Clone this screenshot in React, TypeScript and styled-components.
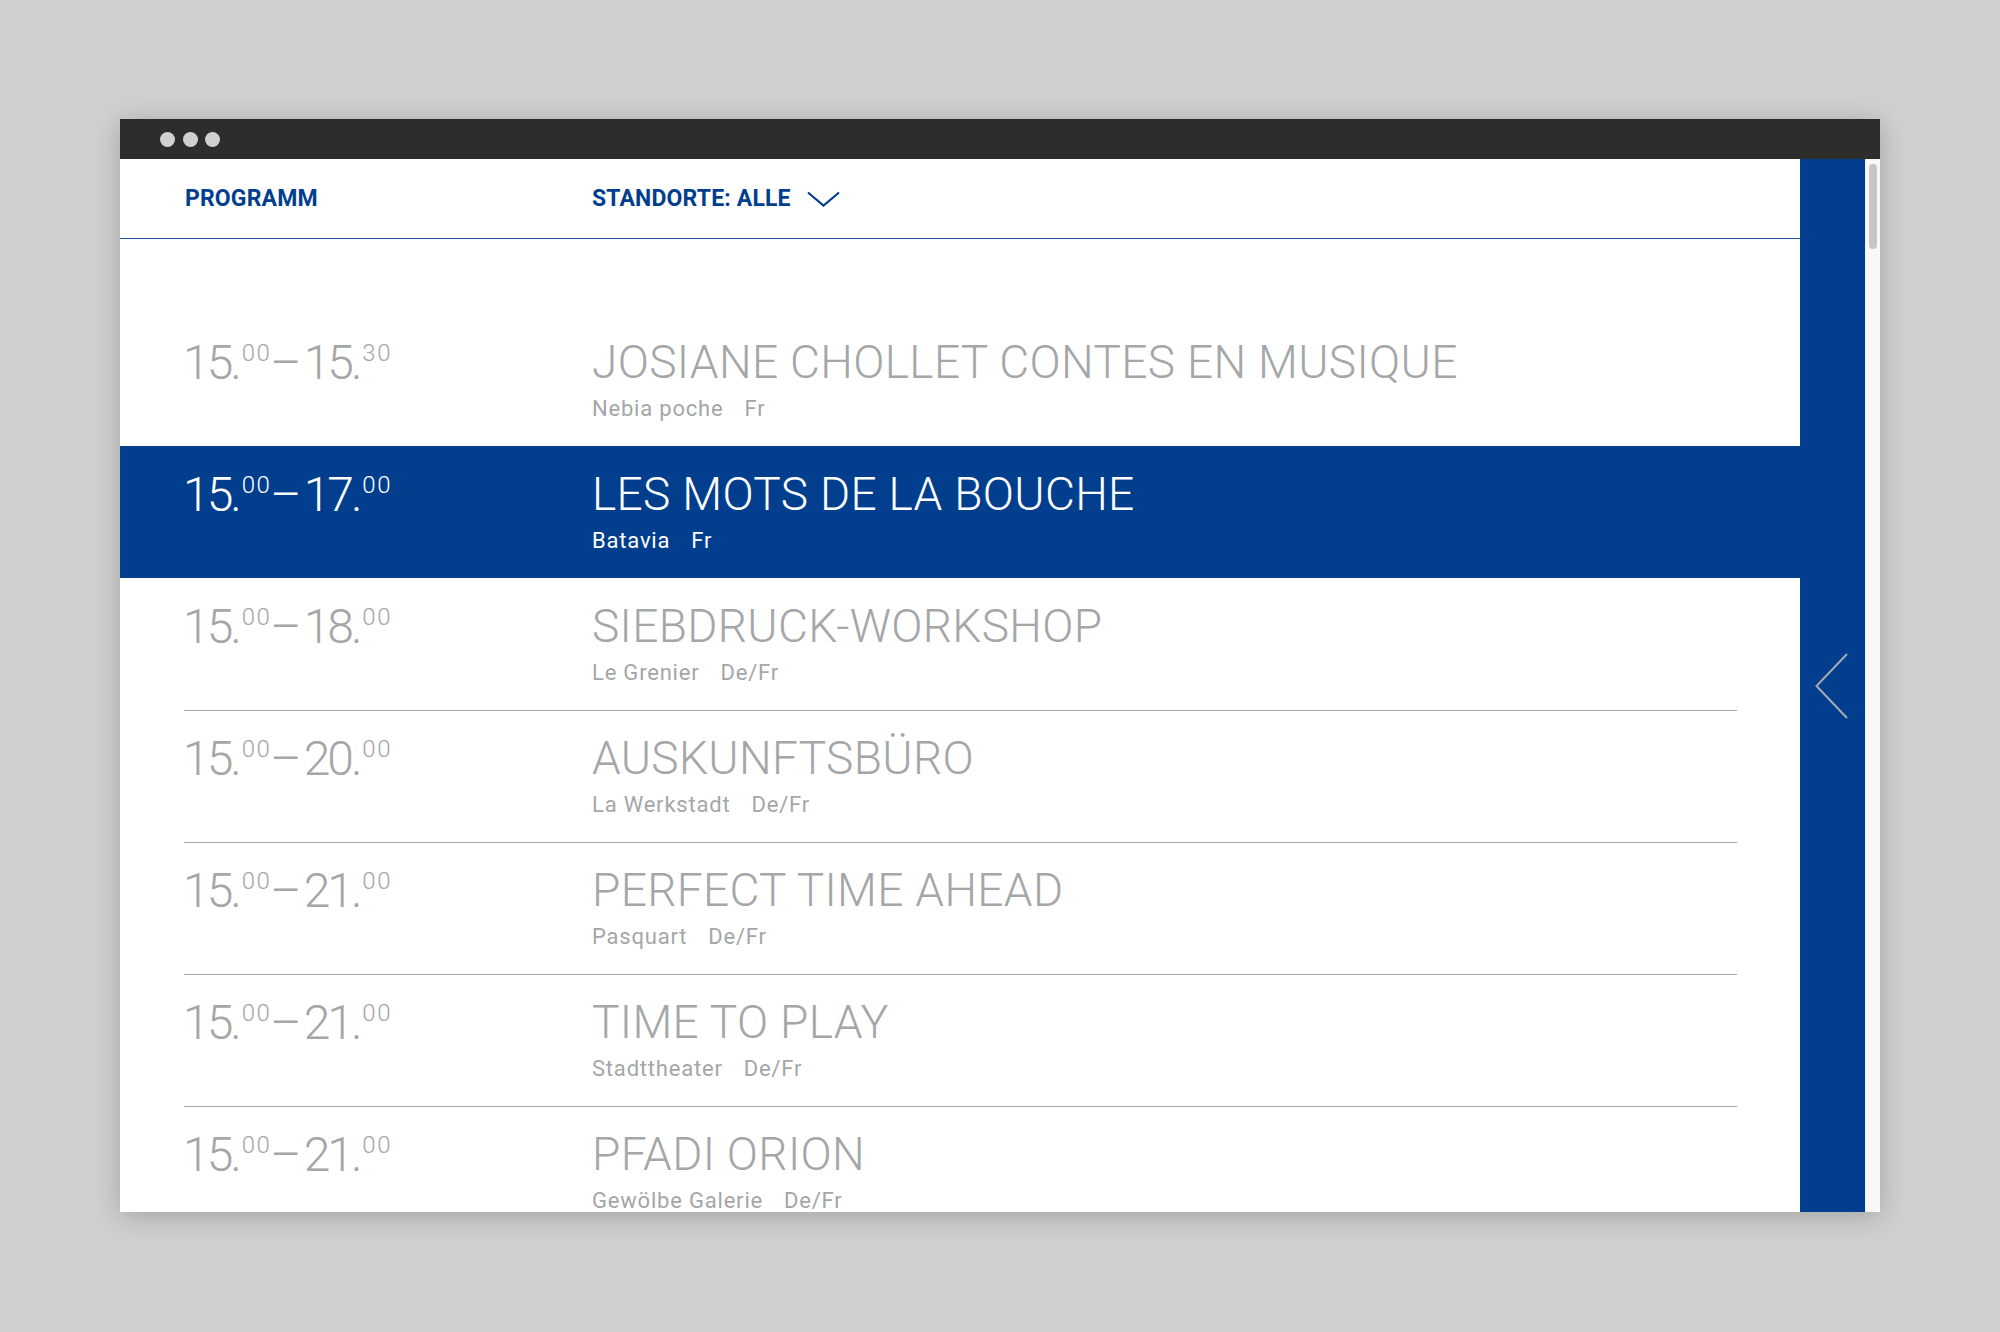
import React from "react";
import styled, { createGlobalStyle } from "styled-components";

const BLUE = "#023e8e";
const GRAY = "#a4a6a8";

const Global = createGlobalStyle`
  html, body { margin: 0; padding: 0; }
  body {
    background: #d0d0d0;
    font-family: Roboto, "Noto Sans", sans-serif;
    width: 2000px;
    height: 1332px;
    overflow: hidden;
  }
`;

const Stage = styled.div`
  padding: 119px 120px 0 120px;
`;

const Window = styled.div`
  width: 1760px;
  height: 1093px;
  display: flex;
  flex-direction: column;
  background: #fff;
  box-shadow: 0 4px 26px rgba(0, 0, 0, 0.22);
`;

const TitleBar = styled.div`
  height: 40px;
  flex: none;
  background: #2e2d2b;
  display: flex;
  align-items: center;
  gap: 7.5px;
  padding-left: 40px;
`;

const Dot = styled.span`
  width: 15px;
  height: 15px;
  border-radius: 50%;
  background: #d0d0d0;
`;

const Body = styled.div`
  flex: 1;
  display: flex;
  min-height: 0;
`;

const Main = styled.div`
  width: 1680px;
  display: flex;
  flex-direction: column;
  overflow: hidden;
`;

const Header = styled.div`
  height: 79px;
  flex: none;
  border-bottom: 1px solid #2756a3;
  display: grid;
  grid-template-columns: 407px 1fr;
  align-items: center;
  padding-left: 65px;
`;

const HeaderLabel = styled.div`
  color: ${BLUE};
  font-family: Roboto, sans-serif;
  font-weight: 700;
  font-size: 23px;
  letter-spacing: 0.15px;
  display: flex;
  align-items: center;
  gap: 16px;
`;

const List = styled.div`
  padding-top: 75px;
`;

const Row = styled.div<{ $selected?: boolean }>`
  height: 132px;
  box-sizing: border-box;
  padding: 0 63px 0 65px;
  background: ${(p) => (p.$selected ? BLUE : "transparent")};
  color: ${(p) => (p.$selected ? "#fff" : GRAY)};
`;

const RowInner = styled.div<{ $divided?: boolean }>`
  height: 100%;
  box-sizing: border-box;
  margin-left: -1px;
  border-top: 1px solid ${(p) => (p.$divided ? "#a9a9a9" : "transparent")};
  display: grid;
  grid-template-columns: 408px 1fr;
  padding-top: 24px;
`;

const Time = styled.div`
  display: flex;
  align-items: flex-start;
  margin-left: -1px;
`;

const TimeMain = styled.span`
  font-weight: 300;
  font-size: 48px;
  line-height: 48px;
  letter-spacing: -3px;
`;

const TimeSup = styled.span`
  font-weight: 300;
  font-size: 24px;
  line-height: 24px;
  margin-top: 2px;
  margin-left: 3px;
  letter-spacing: 1.5px;
`;

const TimeDash = styled.span`
  font-weight: 300;
  font-size: 48px;
  line-height: 48px;
  margin: 0 2px 0 -1px;
`;

const Info = styled.div`
  display: flex;
  flex-direction: column;
`;

const Title = styled.div`
  font-weight: 300;
  font-size: 46px;
  line-height: 46px;
  letter-spacing: 0.35px;
  white-space: nowrap;
`;

const Sub = styled.div`
  margin-top: 13px;
  font-weight: 400;
  font-size: 22px;
  line-height: 22px;
  letter-spacing: 0.8px;
  display: flex;
  gap: 21px;
`;

const Sidebar = styled.div`
  width: 65px;
  flex: none;
  background: ${BLUE};
  display: flex;
  align-items: center;
  justify-content: flex-start;
  padding-left: 15px;
  box-sizing: border-box;
`;

const Track = styled.div`
  width: 15px;
  flex: none;
  background: #f8f8f8;
  border-left: 1px solid #efefef;
  box-sizing: border-box;
  padding: 5px 3px 0 3px;
`;

const Thumb = styled.div`
  height: 85px;
  border-radius: 4px;
  background: #c6c6c6;
`;

type Ev = {
  from: string;
  to: [string, string];
  title: string;
  place: string;
  lang: string;
};

const events: Ev[] = [
  { from: "15.", to: ["15.", "30"], title: "JOSIANE CHOLLET CONTES EN MUSIQUE", place: "Nebia poche", lang: "Fr" },
  { from: "15.", to: ["17.", "00"], title: "LES MOTS DE LA BOUCHE", place: "Batavia", lang: "Fr" },
  { from: "15.", to: ["18.", "00"], title: "SIEBDRUCK-WORKSHOP", place: "Le Grenier", lang: "De/Fr" },
  { from: "15.", to: ["20.", "00"], title: "AUSKUNFTSBÜRO", place: "La Werkstadt", lang: "De/Fr" },
  { from: "15.", to: ["21.", "00"], title: "PERFECT TIME AHEAD", place: "Pasquart", lang: "De/Fr" },
  { from: "15.", to: ["21.", "00"], title: "TIME TO PLAY", place: "Stadttheater", lang: "De/Fr" },
  { from: "15.", to: ["21.", "00"], title: "PFADI ORION", place: "Gewölbe Galerie", lang: "De/Fr" },
];

const SELECTED = 1;

export default function App() {
  return (
    <>
      <Global />
      <Stage>
        <Window>
          <TitleBar>
            <Dot />
            <Dot />
            <Dot />
          </TitleBar>
          <Body>
            <Main>
              <Header>
                <HeaderLabel>PROGRAMM</HeaderLabel>
                <HeaderLabel>
                  STANDORTE: ALLE
                  <svg width="33" height="16" viewBox="0 0 33 16" fill="none">
                    <polyline points="1,1.5 16.5,14.5 32,1.5" stroke={BLUE} strokeWidth="2.2" />
                  </svg>
                </HeaderLabel>
              </Header>
              <List>
                {events.map((e, i) => (
                  <Row key={i} $selected={i === SELECTED}>
                    <RowInner $divided={i > SELECTED + 1}>
                      <Time>
                        <TimeMain>{e.from}</TimeMain>
                        <TimeSup>00</TimeSup>
                        <TimeDash>–</TimeDash>
                        <TimeMain>{e.to[0]}</TimeMain>
                        <TimeSup>{e.to[1]}</TimeSup>
                      </Time>
                      <Info>
                        <Title>{e.title}</Title>
                        <Sub>
                          <span>{e.place}</span>
                          <span>{e.lang}</span>
                        </Sub>
                      </Info>
                    </RowInner>
                  </Row>
                ))}
              </List>
            </Main>
            <Sidebar>
              <svg width="34" height="66" viewBox="0 0 34 66" fill="none">
                <polyline points="32,1 1.5,33 32,65" stroke="#a7a9b0" strokeWidth="2" />
              </svg>
            </Sidebar>
            <Track>
              <Thumb />
            </Track>
          </Body>
        </Window>
      </Stage>
    </>
  );
}
